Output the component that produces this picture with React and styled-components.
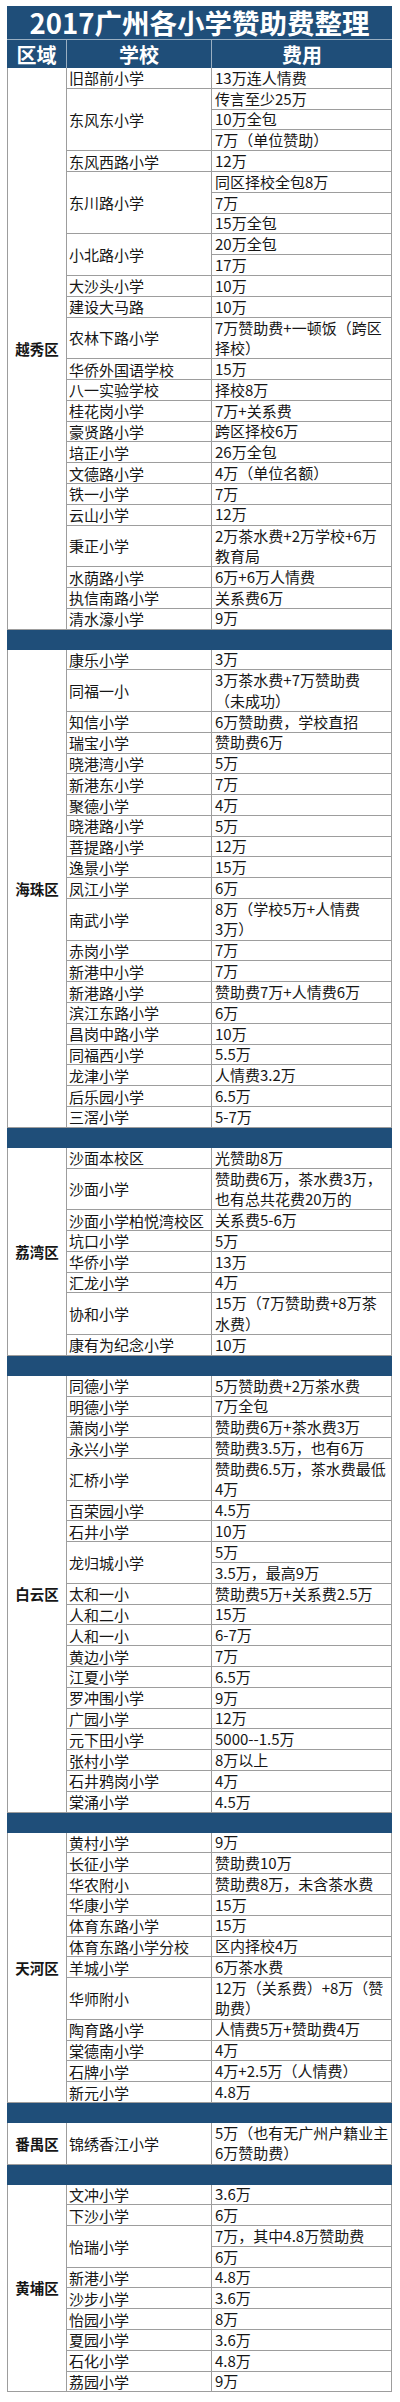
import React from "react";
import styled, { createGlobalStyle } from "styled-components";

const ROW = 20.8;
const BLUE = "#1f4e79";
const LINE = "#9d9d9d";

const districts = [
    {
        name: "越秀区",
        schools: [
            ["旧部前小学", ["13万连人情费"]],
            ["东风东小学", ["传言至少25万", "10万全包", "7万（单位赞助）"]],
            ["东风西路小学", ["12万"]],
            ["东川路小学", ["同区择校全包8万", "7万", "15万全包"]],
            ["小北路小学", ["20万全包", "17万"]],
            ["大沙头小学", ["10万"]],
            ["建设大马路", ["10万"]],
            ["农林下路小学", ["7万赞助费+一顿饭（跨区\n择校）"]],
            ["华侨外国语学校", ["15万"]],
            ["八一实验学校", ["择校8万"]],
            ["桂花岗小学", ["7万+关系费"]],
            ["豪贤路小学", ["跨区择校6万"]],
            ["培正小学", ["26万全包"]],
            ["文德路小学", ["4万（单位名额）"]],
            ["铁一小学", ["7万"]],
            ["云山小学", ["12万"]],
            ["秉正小学", ["2万茶水费+2万学校+6万\n教育局"]],
            ["水荫路小学", ["6万+6万人情费"]],
            ["执信南路小学", ["关系费6万"]],
            ["清水濠小学", ["9万"]],
        ],
    },
    {
        name: "海珠区",
        schools: [
            ["康乐小学", ["3万"]],
            ["同福一小", ["3万茶水费+7万赞助费\n（未成功）"]],
            ["知信小学", ["6万赞助费，学校直招"]],
            ["瑞宝小学", ["赞助费6万"]],
            ["晓港湾小学", ["5万"]],
            ["新港东小学", ["7万"]],
            ["聚德小学", ["4万"]],
            ["晓港路小学", ["5万"]],
            ["菩提路小学", ["12万"]],
            ["逸景小学", ["15万"]],
            ["凤江小学", ["6万"]],
            ["南武小学", ["8万（学校5万+人情费\n3万）"]],
            ["赤岗小学", ["7万"]],
            ["新港中小学", ["7万"]],
            ["新港路小学", ["赞助费7万+人情费6万"]],
            ["滨江东路小学", ["6万"]],
            ["昌岗中路小学", ["10万"]],
            ["同福西小学", ["5.5万"]],
            ["龙津小学", ["人情费3.2万"]],
            ["后乐园小学", ["6.5万"]],
            ["三滘小学", ["5-7万"]],
        ],
    },
    {
        name: "荔湾区",
        schools: [
            ["沙面本校区", ["光赞助8万"]],
            ["沙面小学", ["赞助费6万，茶水费3万，\n也有总共花费20万的"]],
            ["沙面小学柏悦湾校区", ["关系费5-6万"]],
            ["坑口小学", ["5万"]],
            ["华侨小学", ["13万"]],
            ["汇龙小学", ["4万"]],
            ["协和小学", ["15万（7万赞助费+8万茶\n水费）"]],
            ["康有为纪念小学", ["10万"]],
        ],
    },
    {
        name: "白云区",
        schools: [
            ["同德小学", ["5万赞助费+2万茶水费"]],
            ["明德小学", ["7万全包"]],
            ["萧岗小学", ["赞助费6万+茶水费3万"]],
            ["永兴小学", ["赞助费3.5万，也有6万"]],
            ["汇桥小学", ["赞助费6.5万，茶水费最低\n4万"]],
            ["百荣园小学", ["4.5万"]],
            ["石井小学", ["10万"]],
            ["龙归城小学", ["5万", "3.5万，最高9万"]],
            ["太和一小", ["赞助费5万+关系费2.5万"]],
            ["人和二小", ["15万"]],
            ["人和一小", ["6-7万"]],
            ["黄边小学", ["7万"]],
            ["江夏小学", ["6.5万"]],
            ["罗冲围小学", ["9万"]],
            ["广园小学", ["12万"]],
            ["元下田小学", ["5000--1.5万"]],
            ["张村小学", ["8万以上"]],
            ["石井鸦岗小学", ["4万"]],
            ["棠涌小学", ["4.5万"]],
        ],
    },
    {
        name: "天河区",
        schools: [
            ["黄村小学", ["9万"]],
            ["长征小学", ["赞助费10万"]],
            ["华农附小", ["赞助费8万，未含茶水费"]],
            ["华康小学", ["15万"]],
            ["体育东路小学", ["15万"]],
            ["体育东路小学分校", ["区内择校4万"]],
            ["羊城小学", ["6万茶水费"]],
            ["华师附小", ["12万（关系费）+8万（赞\n助费）"]],
            ["陶育路小学", ["人情费5万+赞助费4万"]],
            ["棠德南小学", ["4万"]],
            ["石牌小学", ["4万+2.5万（人情费）"]],
            ["新元小学", ["4.8万"]],
        ],
    },
    {
        name: "番禺区",
        schools: [["锦绣香江小学", ["5万（也有无广州户籍业主\n6万赞助费）"]]],
    },
    {
        name: "黄埔区",
        schools: [
            ["文冲小学", ["3.6万"]],
            ["下沙小学", ["6万"]],
            ["怡瑞小学", ["7万，其中4.8万赞助费", "6万"]],
            ["新港小学", ["4.8万"]],
            ["沙步小学", ["3.6万"]],
            ["怡园小学", ["8万"]],
            ["夏园小学", ["3.6万"]],
            ["石化小学", ["4.8万"]],
            ["荔园小学", ["9万"]],
        ],
    },
];

// work out which grid rows each school and fee take
function layout(schools) {
    let row = 1;
    const cells = schools.map(([school, fees]) => {
        const start = row;
        const feeCells = fees.map((fee) => {
            const span = fee.split("\n").length;
            const cell = { fee, row, span };
            row += span;
            return cell;
        });
        return { school, row: start, span: row - start, fees: feeCells };
    });
    return { cells, units: row - 1 };
}

function District({ name, schools }) {
    const { cells, units } = layout(schools);
    return (
        <Section $units={units}>
            <DistrictCell $row={1} $span={units}>
                {name}
            </DistrictCell>
            {cells.map((c) => (
                <React.Fragment key={c.school}>
                    <SchoolCell $row={c.row} $span={c.span}>
                        {c.school}
                    </SchoolCell>
                    {c.fees.map((f) => (
                        <FeeCell key={f.row} $row={f.row} $span={f.span}>
                            {f.fee}
                        </FeeCell>
                    ))}
                </React.Fragment>
            ))}
        </Section>
    );
}

export default function App() {
    return (
        <>
            <GlobalStyle />
            <Page>
                <Sheet>
                    <Title>2017广州各小学赞助费整理</Title>
                    <Header>
                        <HeadCell>区域</HeadCell>
                        <HeadCell>学校</HeadCell>
                        <HeadCell>费用</HeadCell>
                    </Header>
                    {districts.map((d, i) => (
                        <React.Fragment key={d.name}>
                            {i > 0 && <Separator />}
                            <District name={d.name} schools={d.schools} />
                        </React.Fragment>
                    ))}
                </Sheet>
            </Page>
        </>
    );
}

const GlobalStyle = createGlobalStyle`
    body {
        margin: 0;
        background: #fff;
        font-family: "Noto Sans CJK SC", "Noto Sans", sans-serif;
        color: #161616;
    }
`;

const Page = styled.div`
    padding: 6px 8px 8px 7px;
`;

const Sheet = styled.div`
    width: 385px;
`;

const Title = styled.div`
    height: 33px;
    background: ${BLUE};
    color: #fff;
    font-size: 27.5px;
    font-weight: 700;
    line-height: 33px;
    text-align: center;
    white-space: nowrap;
`;

const Header = styled.div`
    display: grid;
    grid-template-columns: 60px 145px 180px;
    height: 29px;
    box-sizing: border-box;
    background: ${BLUE};
    border-top: 1px solid rgba(255, 255, 255, 0.55);
`;

const HeadCell = styled.div`
    display: flex;
    align-items: center;
    justify-content: center;
    color: #fff;
    font-size: 20px;
    font-weight: 700;
    border-right: 1px solid rgba(255, 255, 255, 0.55);

    &:last-child {
        border-right: none;
    }
`;

const Separator = styled.div`
    height: 20px;
    background: ${BLUE};
`;

const Section = styled.div`
    display: grid;
    grid-template-columns: 59px 145px 180px;
    grid-template-rows: repeat(${(p) => p.$units}, ${ROW}px);
    border-left: 1px solid ${LINE};
`;

const Cell = styled.div`
    grid-row: ${(p) => p.$row} / span ${(p) => p.$span};
    display: flex;
    align-items: center;
    box-sizing: border-box;
    border-right: 1px solid ${LINE};
    border-bottom: 1px solid ${LINE};
    background: #fff;
    overflow: hidden;
`;

const DistrictCell = styled(Cell)`
    grid-column: 1;
    justify-content: center;
    font-size: 14.5px;
    font-weight: 700;
`;

const SchoolCell = styled(Cell)`
    grid-column: 2;
    padding-left: 2px;
    font-size: 15px;
    white-space: nowrap;
`;

const FeeCell = styled(Cell)`
    grid-column: 3;
    padding-left: 3px;
    font-size: 15px;
    line-height: 20.3px;
    white-space: pre;
`;
